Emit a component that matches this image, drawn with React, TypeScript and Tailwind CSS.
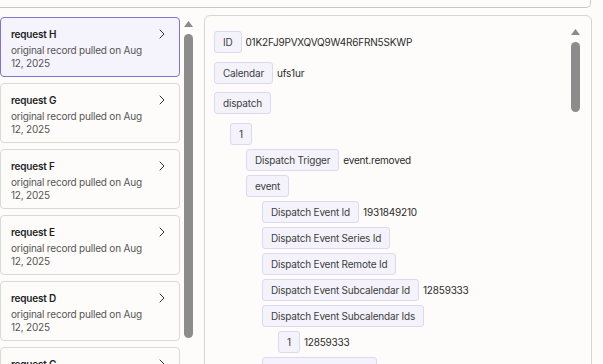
import React from 'react';
import { ChevronRight } from 'lucide-react';

const REQUESTS = ['H', 'G', 'F', 'E', 'D', 'C'];

type Row = { label: string; value?: string; level: number; gap: number };

const ROWS: Row[] = [
  { label: 'ID', value: '01K2FJ9PVXQVQ9W4R6FRN5SKWP', level: 0, gap: 0 },
  { label: 'Calendar', value: 'ufs1ur', level: 0, gap: 9 },
  { label: 'dispatch', level: 0, gap: 8 },
  { label: '1', level: 1, gap: 9 },
  { label: 'Dispatch Trigger', value: 'event.removed', level: 2, gap: 4 },
  { label: 'event', level: 2, gap: 4 },
  { label: 'Dispatch Event Id', value: '1931849210', level: 3, gap: 4 },
  { label: 'Dispatch Event Series Id', level: 3, gap: 4 },
  { label: 'Dispatch Event Remote Id', level: 3, gap: 4 },
  { label: 'Dispatch Event Subcalendar Id', value: '12859333', level: 3, gap: 4 },
  { label: 'Dispatch Event Subcalendar Ids', level: 3, gap: 4 },
  { label: '1', value: '12859333', level: 4, gap: 4 },
  { label: 'Dispatch Event Notes', level: 3, gap: 4 },
];

export default function App() {
  return (
    <div className="w-[603px] h-[364px] overflow-hidden bg-[#fdfcfa] font-['Inter',sans-serif] tracking-[-0.2px] text-[#2a2a2a]">
      <div className="h-[8px] w-[591px] border-b border-r border-[#c8c8c8] rounded-br-[5px]" />

      <div className="flex items-start gap-[8px] mt-[7px]">
        {/* Request list */}
        <div className="flex w-[196px] pt-[2px] shrink-0">
          <div className="w-[180px] flex flex-col gap-[6px] shrink-0">
            {REQUESTS.map((r, i) => (
              <div
                key={r}
                className={
                  i === 0
                    ? 'h-[60px] rounded-[4px] border border-[#8275cf] bg-[#f5f4fc] pl-[10px] pr-[9px] pt-[10px] flex justify-between'
                    : 'h-[60px] rounded-[4px] border border-[#d9d9d9] bg-[#fdfcfa] pl-[10px] pr-[9px] pt-[10px] flex justify-between'
                }
              >
                <div className="leading-[13px]">
                  <div className="text-[10px] font-semibold text-[#1f1f1f] mb-[3px]">request {r}</div>
                  <div className="text-[10px] text-[#555] w-[140px]">original record pulled on Aug 12, 2025</div>
                </div>
                <ChevronRight size={16} strokeWidth={1.5} className="text-[#2e2e2e] -mt-[2px] shrink-0" />
              </div>
            ))}
          </div>
          <div className="flex flex-col items-center w-[16px] shrink-0">
            <svg width="9" height="6" viewBox="0 0 9 6" className="mt-[4px]">
              <path d="M4.5 0 L9 6 L0 6 Z" fill="#8a8a8a" />
            </svg>
            <div className="w-[9px] h-[304px] mt-[7px] rounded-full bg-[#8c8c8c]" />
          </div>
        </div>

        {/* Record detail */}
        <div className="w-[388px] h-[360px] shrink-0 border border-[#d6d6d6] rounded-t-[6px] bg-[#fdfcfa] flex">
          <div className="flex-1 pl-[9px] pt-[15px] flex flex-col items-start">
            {ROWS.map((row, i) => (
              <div
                key={i}
                className="flex items-center gap-[4px]"
                style={{ marginTop: row.gap, marginLeft: row.level * 16 }}
              >
                <span className="h-[22px] px-[8px] flex items-center rounded-[3px] border border-[#dcd9f0] bg-[#f4f3fc] text-[10px] text-[#3d3d3d]">
                  {row.label}
                </span>
                {row.value && <span className="text-[10px] text-[#2b2b2b]">{row.value}</span>}
              </div>
            ))}
          </div>
          <div className="flex flex-col items-center w-[16px] mr-[8px] pt-[13px] shrink-0">
            <svg width="9" height="6" viewBox="0 0 9 6">
              <path d="M4.5 0 L9 6 L0 6 Z" fill="#8a8a8a" />
            </svg>
            <div className="w-[9px] h-[70px] mt-[7px] rounded-full bg-[#8c8c8c]" />
          </div>
        </div>
      </div>
    </div>
  );
}
